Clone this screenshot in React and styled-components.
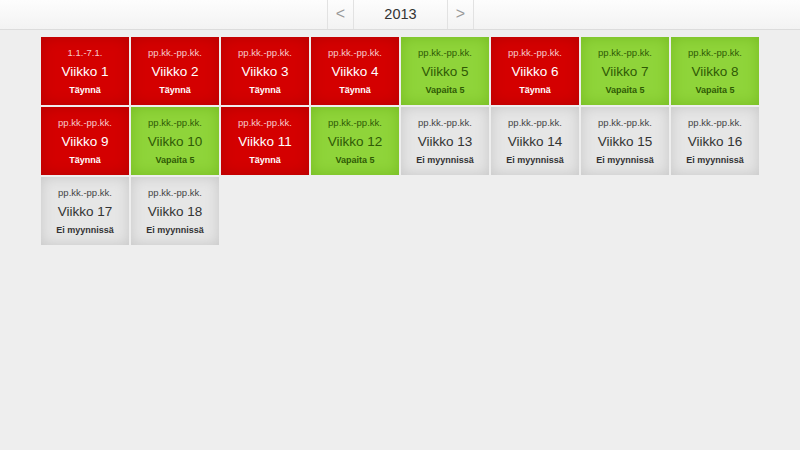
import React from "react";
import styled, { createGlobalStyle } from "styled-components";

const Global = createGlobalStyle`
  html, body { margin: 0; padding: 0; background: #eeeeee; }
  body { font-family: "Liberation Sans", Arial, sans-serif; }
`;

const Page = styled.div`
  width: 800px;
  height: 450px;
  background: #eeeeee;
`;

const Header = styled.div`
  height: 29px;
  border-bottom: 1px solid #dcdcdc;
  background: linear-gradient(#fdfdfd, #f3f3f3);
  display: flex;
  justify-content: center;
`;

const Nav = styled.div`
  display: flex;
  border-left: 1px solid #e2e2e2;
  border-right: 1px solid #e2e2e2;
  margin-left: 1px;
`;

const NavButton = styled.div`
  width: ${(p) => p.$w}px;
  display: flex;
  align-items: center;
  justify-content: center;
  color: ${(p) => (p.$arrow ? "#999" : "#333")};
  font-size: ${(p) => (p.$arrow ? 16 : 14.5)}px;
  border-left: ${(p) => (p.$sep ? "1px solid #e2e2e2" : "none")};
  padding-bottom: 1px;
`;

const Grid = styled.div`
  display: grid;
  grid-template-columns: repeat(8, 88px);
  grid-auto-rows: 68px;
  gap: 2px;
  padding: 7px 0 0 41px;
`;

const palette = {
  red: { bg: "#d40000", edge: "#b50000", fg: "#ffffff", sub: "#f5caca" },
  green: { bg: "#8fd43a", edge: "#76bb22", fg: "#2f5a06", sub: "#2f5a06" },
  gray: { bg: "#e6e6e6", edge: "#c6c6c6", fg: "#333333", sub: "#444444" },
};

const Tile = styled.div`
  background: ${(p) => palette[p.$kind].bg};
  box-shadow: inset 0 0 14px ${(p) => palette[p.$kind].edge};
  color: ${(p) => palette[p.$kind].fg};
  display: flex;
  flex-direction: column;
  align-items: center;
  padding-top: 10px;
  box-sizing: border-box;
`;

const DateLine = styled.div`
  font-size: 9.5px;
  line-height: 12px;
  color: ${(p) => palette[p.$kind].sub};
`;

const Week = styled.div`
  font-size: 13.5px;
  line-height: 18px;
  margin-top: 4px;
`;

const Status = styled.div`
  font-size: 9px;
  font-weight: bold;
  line-height: 12px;
  margin-top: 3px;
`;

const weeks = [
  ["1.1.-7.1.", "red"],
  ["pp.kk.-pp.kk.", "red"],
  ["pp.kk.-pp.kk.", "red"],
  ["pp.kk.-pp.kk.", "red"],
  ["pp.kk.-pp.kk.", "green"],
  ["pp.kk.-pp.kk.", "red"],
  ["pp.kk.-pp.kk.", "green"],
  ["pp.kk.-pp.kk.", "green"],
  ["pp.kk.-pp.kk.", "red"],
  ["pp.kk.-pp.kk.", "green"],
  ["pp.kk.-pp.kk.", "red"],
  ["pp.kk.-pp.kk.", "green"],
  ["pp.kk.-pp.kk.", "gray"],
  ["pp.kk.-pp.kk.", "gray"],
  ["pp.kk.-pp.kk.", "gray"],
  ["pp.kk.-pp.kk.", "gray"],
  ["pp.kk.-pp.kk.", "gray"],
  ["pp.kk.-pp.kk.", "gray"],
];

const statusText = { red: "Täynnä", green: "Vapaita 5", gray: "Ei myynnissä" };

export default function App() {
  return (
    <Page>
      <Global />
      <Header>
        <Nav>
          <NavButton $w={25} $arrow>&lt;</NavButton>
          <NavButton $w={93} $sep>2013</NavButton>
          <NavButton $w={25} $arrow $sep>&gt;</NavButton>
        </Nav>
      </Header>
      <Grid>
        {weeks.map(([d, k], i) => (
          <Tile key={i} $kind={k}>
            <DateLine $kind={k}>{d}</DateLine>
            <Week>Viikko {i + 1}</Week>
            <Status>{statusText[k]}</Status>
          </Tile>
        ))}
      </Grid>
    </Page>
  );
}
